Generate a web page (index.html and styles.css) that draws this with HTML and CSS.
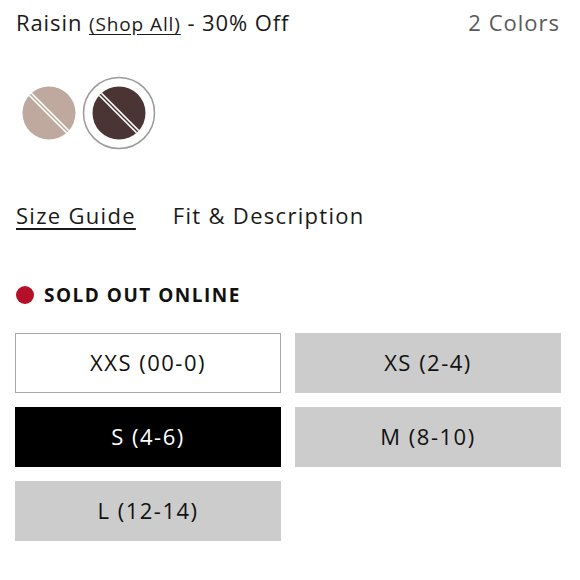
FILE: index.html
```html
<!DOCTYPE html>
<html>
<head>
<meta charset="utf-8">
<link rel="stylesheet" href="styles.css">
</head>
<body>
<div class="page">
  <div class="header">
    <div class="title">Raisin <a class="shop">(Shop All)</a> - 30% Off</div>
    <div class="count">2 Colors</div>
  </div>
  <div class="swatches">
    <svg class="sw sw-plain" width="56" height="56" viewBox="0 0 56 56">
      <defs><clipPath id="c1"><circle cx="28" cy="28" r="26.5"/></clipPath></defs>
      <circle cx="28" cy="28" r="26.5" fill="#bfa99e"/>
      <g clip-path="url(#c1)" stroke="#fff" stroke-width="1.6">
        <line x1="0" y1="-2.2" x2="58.2" y2="56"/>
        <line x1="-2.2" y1="0" x2="56" y2="58.2"/>
      </g>
    </svg>
    <svg class="sw sw-sel" width="74" height="74" viewBox="0 0 74 74">
      <defs><clipPath id="c2"><circle cx="37" cy="37" r="26.5"/></clipPath></defs>
      <circle cx="37" cy="37" r="35.5" fill="none" stroke="#9a9a9a" stroke-width="1.5"/>
      <circle cx="37" cy="37" r="26.5" fill="#4a3534"/>
      <g clip-path="url(#c2)" stroke="#fff" stroke-width="1.6">
        <line x1="9" y1="6.8" x2="67.2" y2="65"/>
        <line x1="6.8" y1="9" x2="65" y2="67.2"/>
      </g>
    </svg>
  </div>
  <div class="tabs">
    <a class="tab active">Size Guide</a>
    <a class="tab">Fit &amp; Description</a>
  </div>
  <div class="status">
    <span class="dot"></span>
    <span class="status-text">SOLD OUT ONLINE</span>
  </div>
  <div class="sizes">
    <div class="size avail">XXS (00-0)</div>
    <div class="size out">XS (2-4)</div>
    <div class="size selected">S (4-6)</div>
    <div class="size out">M (8-10)</div>
    <div class="size out">L (12-14)</div>
  </div>
</div>
</body>
</html>
```

FILE: styles.css
```css
html, body {
  margin: 0;
  padding: 0;
  background: #fff;
}
body {
  font-family: "Open Sans", "Noto Sans", sans-serif;
  color: #111;
}
.page {
  padding: 8px 19px 0 15px;
}
.header {
  display: flex;
  justify-content: space-between;
  align-items: baseline;
  height: 30px;
  font-size: 22px;
  line-height: 28px;
  padding-left: 1px;
}
.title {
  color: #1a1a1a;
  letter-spacing: 0.9px;
}
.shop {
  font-size: 19px;
  text-decoration: underline;
  text-underline-offset: 3px;
  color: #1a1a1a;
}
.count {
  color: #5a5a5a;
  letter-spacing: 1px;
  margin-right: 1px;
}
.swatches {
  display: flex;
  align-items: center;
  margin-top: 38px;
  height: 74px;
  gap: 5px;
  padding-left: 6px;
}
.sw {
  display: block;
}
.tabs {
  display: flex;
  gap: 37px;
  margin-top: 51px;
  font-size: 22px;
  line-height: 28px;
  padding-left: 1px;
}
.tab {
  color: #1a1a1a;
  letter-spacing: 1.3px;
}
.tab.active {
  text-decoration: underline;
  text-underline-offset: 4px;
  text-decoration-thickness: 1.5px;
}
.status {
  display: flex;
  align-items: center;
  gap: 10px;
  margin-top: 52px;
  height: 28px;
  padding-left: 1px;
}
.dot {
  width: 18px;
  height: 18px;
  border-radius: 50%;
  background: #b5102a;
}
.status-text {
  font-weight: 700;
  font-size: 19px;
  letter-spacing: 1.5px;
  color: #111;
}
.sizes {
  display: grid;
  grid-template-columns: 266px 266px;
  grid-auto-rows: 60px;
  gap: 14px;
  margin-top: 24px;
}
.size {
  display: flex;
  align-items: center;
  justify-content: center;
  font-size: 22px;
  letter-spacing: 1.5px;
  padding-bottom: 2px;
  box-sizing: border-box;
}
.size.avail {
  background: #fff;
  border: 1.5px solid #a8a8a8;
  color: #111;
}
.size.out {
  background: #cccccc;
  color: #111;
}
.size.selected {
  background: #000;
  color: #fff;
}
```
